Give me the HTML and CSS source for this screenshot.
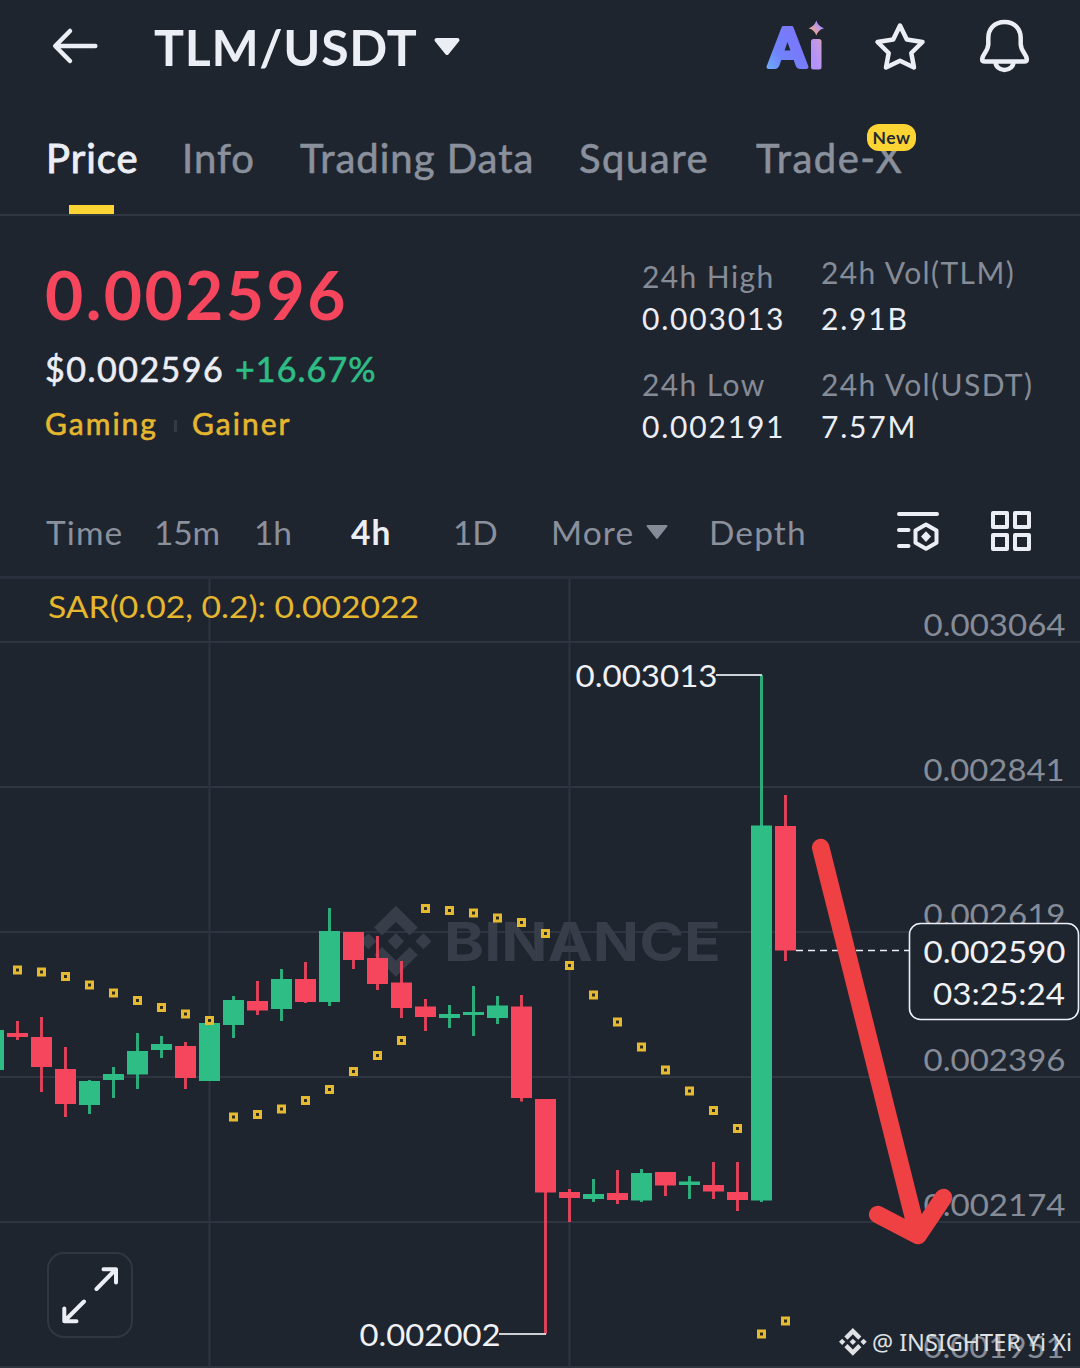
FILE: index.html
```html
<!DOCTYPE html>
<html lang="en">
<head>
<meta charset="utf-8">
<title>TLM/USDT</title>
<link rel="stylesheet" href="styles.css">
</head>
<body>
<header class="topbar">
  <svg class="back" width="48" height="40" viewBox="51 26 48 40"><path d="M95.3 46H55.5M70 31L55.2 46 70 61"/></svg>
  <h1 class="pair">TLM/USDT</h1>
  <svg class="caret" width="28" height="20" viewBox="433 36 28 20"><path d="M436.500 40H457.500L447 53Z"/></svg>
  <svg class="ai" width="60" height="52" viewBox="766 20 60 52">
    <defs>
      <linearGradient id="blue" x1="0" y1="1" x2=".6" y2=".3"><stop offset="0" stop-color="#6cb6fb"/><stop offset=".5" stop-color="#7083fb"/><stop offset="1" stop-color="#7a78fb"/></linearGradient>
      <linearGradient id="violet" x1="0" y1="1" x2="1" y2="0"><stop offset=".3" stop-color="#b292fb"/><stop offset=".85" stop-color="#c79ae0"/><stop offset="1" stop-color="#efa585"/></linearGradient>
      <linearGradient id="spark" x1="0" y1="1" x2="1" y2="0"><stop offset=".25" stop-color="#e9a98f"/><stop offset=".7" stop-color="#b292fb"/></linearGradient>
    </defs>
    <text class="ai-letter" x="769" y="67" textLength="37" lengthAdjust="spacingAndGlyphs">A</text>
    <rect x="811" y="39" width="10.500" height="30.500" rx="2.500" fill="url(#violet)"/>
    <path d="M816.300 20.500Q818 26.500 824 28.200 818 29.900 816.300 35.500 814.600 29.900 808.600 28.200 814.600 26.500 816.300 20.500Z" fill="url(#spark)"/>
  </svg>
  <svg class="star" width="54" height="52" viewBox="873 20 54 52"><path d="M900 25.500L906.800 39.500 922.500 42 911.300 53 914 67.500 900 60.800 886 67.500 888.700 53 877.500 42 893.200 39.500Z"/></svg>
  <svg class="bell" width="54" height="56" viewBox="978 18 54 56"><path d="M1004.500 22C994 22 988.300 29.500 988.300 38V44C988.300 51 982.600 54 982.200 59 982 61.200 983 61.500 984.500 61.500H1024.500C1026 61.500 1027 61.200 1026.800 59 1026.400 54 1020.700 51 1020.700 44V38C1020.700 29.500 1015 22 1004.500 22ZM995.500 62A9 8 0 0 0 1013.500 62"/></svg>
</header>

<nav class="tabs">
  <a class="tab active"><span>Price</span></a>
  <a class="tab"><span>Info</span></a>
  <a class="tab"><span>Trading Data</span></a>
  <a class="tab wide"><span>Square</span></a>
  <a class="tab wide"><span>Trade-X</span><span class="badge">New</span></a>
</nav>

<section class="summary">
  <div class="quote">
    <div class="last">0.002596</div>
    <div class="fiat"><span class="usd">$0.002596</span><span class="change">+16.67%</span></div>
    <div class="tags"><span>Gaming</span><i class="sep"></i><span>Gainer</span></div>
  </div>
  <dl class="stats">
    <div><dt>24h High</dt><dd>0.003013</dd></div>
    <div class="raised"><dt>24h Vol(TLM)</dt><dd>2.91B</dd></div>
    <div><dt>24h Low</dt><dd>0.002191</dd></div>
    <div><dt>24h Vol(USDT)</dt><dd>7.57M</dd></div>
  </dl>
</section>

<nav class="frames">
  <span>Time</span><span class="num">15m</span><span class="num">1h</span><span class="on">4h</span><span class="num">1D</span>
  <span class="more">More<svg width="22" height="16" viewBox="646 523 22 16"><path d="M647.500 525H666.500L657 537Z"/></svg></span>
  <span>Depth</span>
  <svg class="tool" width="44" height="42" viewBox="896 511 44 42"><path d="M899 515H937M899 531H908.500M899 547H908.500M926 525.500L936.500 531.500V543.800L926 549.800 915.500 543.800V531.500Z"/><path class="solid" d="M926 532.300L931 537.600 926 543 921 537.600Z"/></svg>
  <svg class="tool" width="42" height="42" viewBox="990 510 42 42"><path d="M993 513H1007V527H993ZM1015 513H1029V527H1015ZM993 535H1007V549H993ZM1015 535H1029V549H1015Z"/></svg>
</nav>

<main class="chart">
  <svg class="plot" width="1080" height="789" viewBox="0 579 1080 789">
    <defs>
      <marker id="dot" markerUnits="userSpaceOnUse" markerWidth="10" markerHeight="10" refX="5" refY="5"><rect x="2" y="2" width="6" height="6" fill="#2e2a1e" stroke="#e5b930" stroke-width="3"/></marker>
      <g id="logo"><path d="M38.730 53.200L63.320 28.620 87.920 53.220 102.220 38.910 63.320 0 24.420 38.900ZM0 63.310L14.310 49 28.620 63.310 14.310 77.620ZM38.730 73.420L63.320 98.010 87.920 73.410 102.230 87.700 63.320 126.610 24.410 87.730ZM98.010 63.310L112.320 49 126.620 63.310 112.310 77.610ZM77.830 63.300L63.320 48.780 48.800 63.300 63.300 77.830Z"/></g>
    </defs>

    <path class="grid" d="M209.500 579V1368M569.500 579V1368M0 642H1080M0 787H1080M0 932H1080M0 1077H1080M0 1222H1080M0 1367H1080"/>
    <g class="brand">
      <use href="#logo" transform="translate(360.300 905.700) scale(.562)"/>
      <text x="444" y="961" textLength="277" lengthAdjust="spacingAndGlyphs">BINANCE</text>
    </g>

    <g class="axis">
      <text x="923.500" y="636" textLength="142" lengthAdjust="spacingAndGlyphs">0.003064</text>
      <text x="923.500" y="781" textLength="141" lengthAdjust="spacingAndGlyphs">0.002841</text>
      <text x="923.500" y="925.500" textLength="142" lengthAdjust="spacingAndGlyphs">0.002619</text>
      <text x="923.500" y="1071" textLength="142" lengthAdjust="spacingAndGlyphs">0.002396</text>
      <text x="923.500" y="1216" textLength="142" lengthAdjust="spacingAndGlyphs">0.002174</text>
      <text x="923.500" y="1358" textLength="141" lengthAdjust="spacingAndGlyphs">0.001951</text>
    </g>

    <g class="up">
      <path class="wick" d="M89.500 1080V1114M113.500 1067V1098M137.500 1033V1089M161.500 1036V1058M233.500 996V1038M281.500 969V1021M329.500 908V1006M449.500 1005V1028M473.500 986V1036M497.500 996V1024M593.500 1179V1202M641.500 1169V1202M689.500 1176V1199M761.500 675V1202"/>
      <path class="body" d="M-6.500 1030V1070M89.500 1081V1105M113.500 1074V1080M137.500 1051V1074.500M161.500 1044V1050M209.500 1023V1081M233.500 1000V1025M281.500 979V1009M329.500 931V1002M449.500 1014V1018M473.500 1012V1015M497.500 1005.500V1018M593.500 1194V1199M641.500 1173V1200.500M689.500 1181.500V1185M761.500 825.500V1200.500"/>
    </g>
    <g class="down">
      <path class="wick" d="M17.500 1021V1040M41.500 1017V1092M65.500 1047V1117M185.500 1042V1089M257.500 981V1015M305.500 962V1003M353.500 932V969M377.500 936V990M401.500 961V1018M425.500 999V1031M521.500 995V1101.500M545.500 1099V1334M569.500 1189V1222M617.500 1170V1204M665.500 1172V1196M713.500 1162V1199M737.500 1162V1211M785.500 795V961"/>
      <path class="body" d="M17.500 1033V1037M41.500 1037V1067M65.500 1069V1104M185.500 1046V1078M257.500 1001V1010.500M305.500 979V1002M353.500 932V960M377.500 958V984M401.500 982.500V1008M425.500 1006.500V1017M521.500 1006.500V1098M545.500 1099V1192.500M569.500 1192V1198M617.500 1193V1200M665.500 1172V1185.500M713.500 1185V1191.500M737.500 1192V1200M785.500 826V950.500"/>
    </g>

    <polyline class="sar" points="17.500,970 41.500,972 65.500,976.500 89.500,985 113.500,993 137.500,1000.500 161.500,1007.500 185.500,1014 209.500,1020.500 233.500,1117 257.500,1114.500 281.500,1109 305.500,1100.500 329.500,1089.500 353.500,1071.500 377.500,1055.500 401.500,1040.500 425.500,908.500 449.500,910.500 473.500,913 497.500,918 521.500,922.500 545.500,933.500 569.500,965.500 593.500,995 617.500,1022 641.500,1047 665.500,1070 689.500,1091 713.500,1110.500 737.500,1128.500 761.500,1334 785.500,1321"/>

    <path class="leader" d="M716 675H762M499 1334H546"/>
    <path class="dash" d="M796 950.500H909"/>
    <g class="mark">
      <text x="575.500" y="687" textLength="142" lengthAdjust="spacingAndGlyphs">0.003013</text>
      <text x="359.500" y="1345.500" textLength="141" lengthAdjust="spacingAndGlyphs">0.002002</text>
    </g>
    <text class="sar-label" x="48" y="618" textLength="371" lengthAdjust="spacingAndGlyphs">SAR(0.02, 0.2): 0.002022</text>

    <g class="mark">
      <rect class="tip" x="909.500" y="923.500" width="169" height="96" rx="11"/>
      <text x="923.500" y="962.500" textLength="142" lengthAdjust="spacingAndGlyphs">0.002590</text>
      <text x="933" y="1004.500" textLength="132" lengthAdjust="spacingAndGlyphs">03:25:24</text>
    </g>

    <path class="trend" d="M820.700 847.500L918 1235.500M877.700 1214.500L918 1235.500 943.500 1197.500"/>

    <g class="author">
      <use href="#logo" transform="translate(839 1328) scale(.219)"/>
      <text x="872" y="1350.500" textLength="200">@ INSIGHTER Yi Xi</text>
    </g>
  </svg>
  <button class="expand" aria-label="Expand chart"><svg width="60" height="60" viewBox="60 1265 60 60"><path d="M96.500 1289L115.500 1269.500M103.500 1269.300H116V1282.500M84 1301.500L64.500 1321M64.300 1308.500V1321.200H76.500"/></svg></button>
</main>
</body>
</html>
```
FILE: styles.css
```css
* { box-sizing: border-box; }

body {
  margin: 0;
  width: 1080px;
  height: 1368px;
  overflow: hidden;
  background: #1f252f;
  color: #eceef6;
  font-family: Lato, "Open Sans", sans-serif;
}

svg { display: block; flex: none; }

/* header */
.topbar {
  display: flex;
  align-items: center;
  height: 92px;
  padding-left: 51px;
}
.back, .star, .bell, .tool {
  fill: none;
  stroke: #eceef6;
  stroke-width: 4.5;
  stroke-linecap: round;
  stroke-linejoin: round;
}
.pair {
  width: 279px;
  margin: 2px 0 0 55px;
  font-size: 50px;
  line-height: 60px;
  font-weight: 700;
  letter-spacing: .7px;
  white-space: nowrap;
}
.caret { fill: #eceef6; stroke: #eceef6; stroke-width: 4; stroke-linejoin: round; }
.ai { margin-left: 305px; overflow: visible; }
.ai-letter {
  font-family: Lato, sans-serif;
  font-size: 53px;
  font-weight: 900;
  fill: url(#blue);
  stroke: url(#blue);
  stroke-width: 4;
  stroke-linejoin: round;
}
.star { margin-left: 47px; }
.bell { margin-left: 51px; }

/* section tabs */
.tabs {
  display: grid;
  grid-template-columns: 136px 118px 279px 177px auto;
  height: 124px;
  padding: 42px 0 0 46px;
  border-bottom: 2px solid #2f3742;
}
.tab {
  position: relative;
  font-size: 40px;
  line-height: 48px;
  letter-spacing: 1px;
  color: #8a909c;
  -webkit-text-stroke: .6px currentColor;
  white-space: nowrap;
}
.tab.wide { letter-spacing: 1.5px; }
.tab.active { color: #eceef6; -webkit-text-stroke-width: .9px; }
.tab.active::after {
  content: "";
  position: absolute;
  left: 23px;
  top: 71px;
  width: 45px;
  height: 9px;
  background: #fcd535;
}
.badge {
  position: absolute;
  left: 111px;
  top: -10px;
  width: 49px;
  height: 27px;
  border-radius: 12px;
  background: #fcd535;
  color: #252a31;
  font-size: 17.5px;
  line-height: 27px;
  font-weight: 700;
  text-align: center;
  letter-spacing: .5px;
  -webkit-text-stroke: 0;
}

/* price summary */
.summary {
  display: grid;
  grid-template-columns: 596px 1fr;
  height: 270px;
  padding: 43px 0 0 46px;
}
.last {
  margin-left: -1px;
  font-size: 66px;
  line-height: 72px;
  font-weight: 700;
  color: #f6465d;
  letter-spacing: 2.400px;
}
.fiat {
  display: grid;
  grid-template-columns: 190px auto;
  margin: 18px 0 0 -1px;
  font-size: 34px;
  line-height: 40px;
  -webkit-text-stroke: .6px currentColor;
}
.usd { letter-spacing: 1.500px; }
.change { color: #2ebd85; letter-spacing: 1.1px; }
.tags {
  display: grid;
  grid-template-columns: 129px 18px auto;
  align-items: center;
  margin: 16px 0 0 -1px;
  font-size: 30px;
  line-height: 36px;
  color: #e5b72e;
  letter-spacing: 2px;
  -webkit-text-stroke: .6px currentColor;
}
.sep { width: 3px; height: 12px; margin-top: 5px; background: #333b47; }
.stats {
  display: grid;
  grid-template-columns: 179px auto;
  align-content: start;
  row-gap: 30px;
  margin: -1px 0 0;
  font-size: 30px;
  line-height: 36px;
  letter-spacing: 1.4px;
  white-space: nowrap;
}
.stats dt { color: #868c97; margin-bottom: 6px; }
.stats dd { margin: 0; letter-spacing: 1.800px; }
.stats .raised dt { margin: -4px 0 10px; }

/* timeframe bar */
.frames {
  display: grid;
  grid-template-columns: 108px 100px 97px 102px 98px 158px 187px 94px auto;
  align-items: center;
  height: 93px;
  padding-left: 46px;
  border-bottom: 3px solid #2a303b;
  font-size: 33.5px;
  line-height: 40px;
  letter-spacing: 1.1px;
  color: #8a909c;
}
.frames span { padding-top: 1px; }
.frames .num { letter-spacing: -.2px; }
.frames .on { color: #eceef6; font-weight: 700; }
.more { display: flex; align-items: center; gap: 12px; }
.more svg { fill: #858b97; stroke: #858b97; stroke-width: 2; stroke-linejoin: round; }
.tool { stroke-width: 4; }
.tool .solid { fill: #eceef6; stroke: none; }

/* chart */
.chart { position: relative; height: 789px; }
.plot text { font-size: 30px; white-space: pre; }
.grid { fill: none; stroke: #2e3540; stroke-width: 2; }
.brand { fill: #373e49; }
.plot .brand text { font-family: Inter, sans-serif; font-size: 53px; font-weight: 700; }
.axis { fill: #868c97; }
.mark { fill: #f0f2f8; }
.up { stroke: #2ebd85; }
.down { stroke: #f6465d; }
.wick { stroke-width: 3; opacity: .88; }
.body { stroke-width: 21; }
.sar { fill: none; marker: url(#dot); }
.sar-label { fill: #e5b72e; }
.leader { stroke: #cdd0d6; stroke-width: 2; }
.dash { stroke: #eceef6; stroke-width: 1.600; stroke-dasharray: 7 5; }
.tip { fill: #1f252f; stroke: #eceef6; stroke-width: 1.600; }
.trend { fill: none; stroke: #ef4044; stroke-width: 17.500; stroke-linecap: round; stroke-linejoin: round; }
.author { fill: #dfe1e4; }
.plot .author text { font-family: "Noto Sans", sans-serif; font-size: 23.500px; }

.expand {
  position: absolute;
  left: 47px;
  top: 673px;
  display: grid;
  place-items: center;
  width: 86px;
  height: 86px;
  padding: 0;
  border: 2px solid #303742;
  border-radius: 17px;
  background: #1f252f;
}
.expand svg { fill: none; stroke: #eceef6; stroke-width: 4; stroke-linecap: round; stroke-linejoin: round; }
```
